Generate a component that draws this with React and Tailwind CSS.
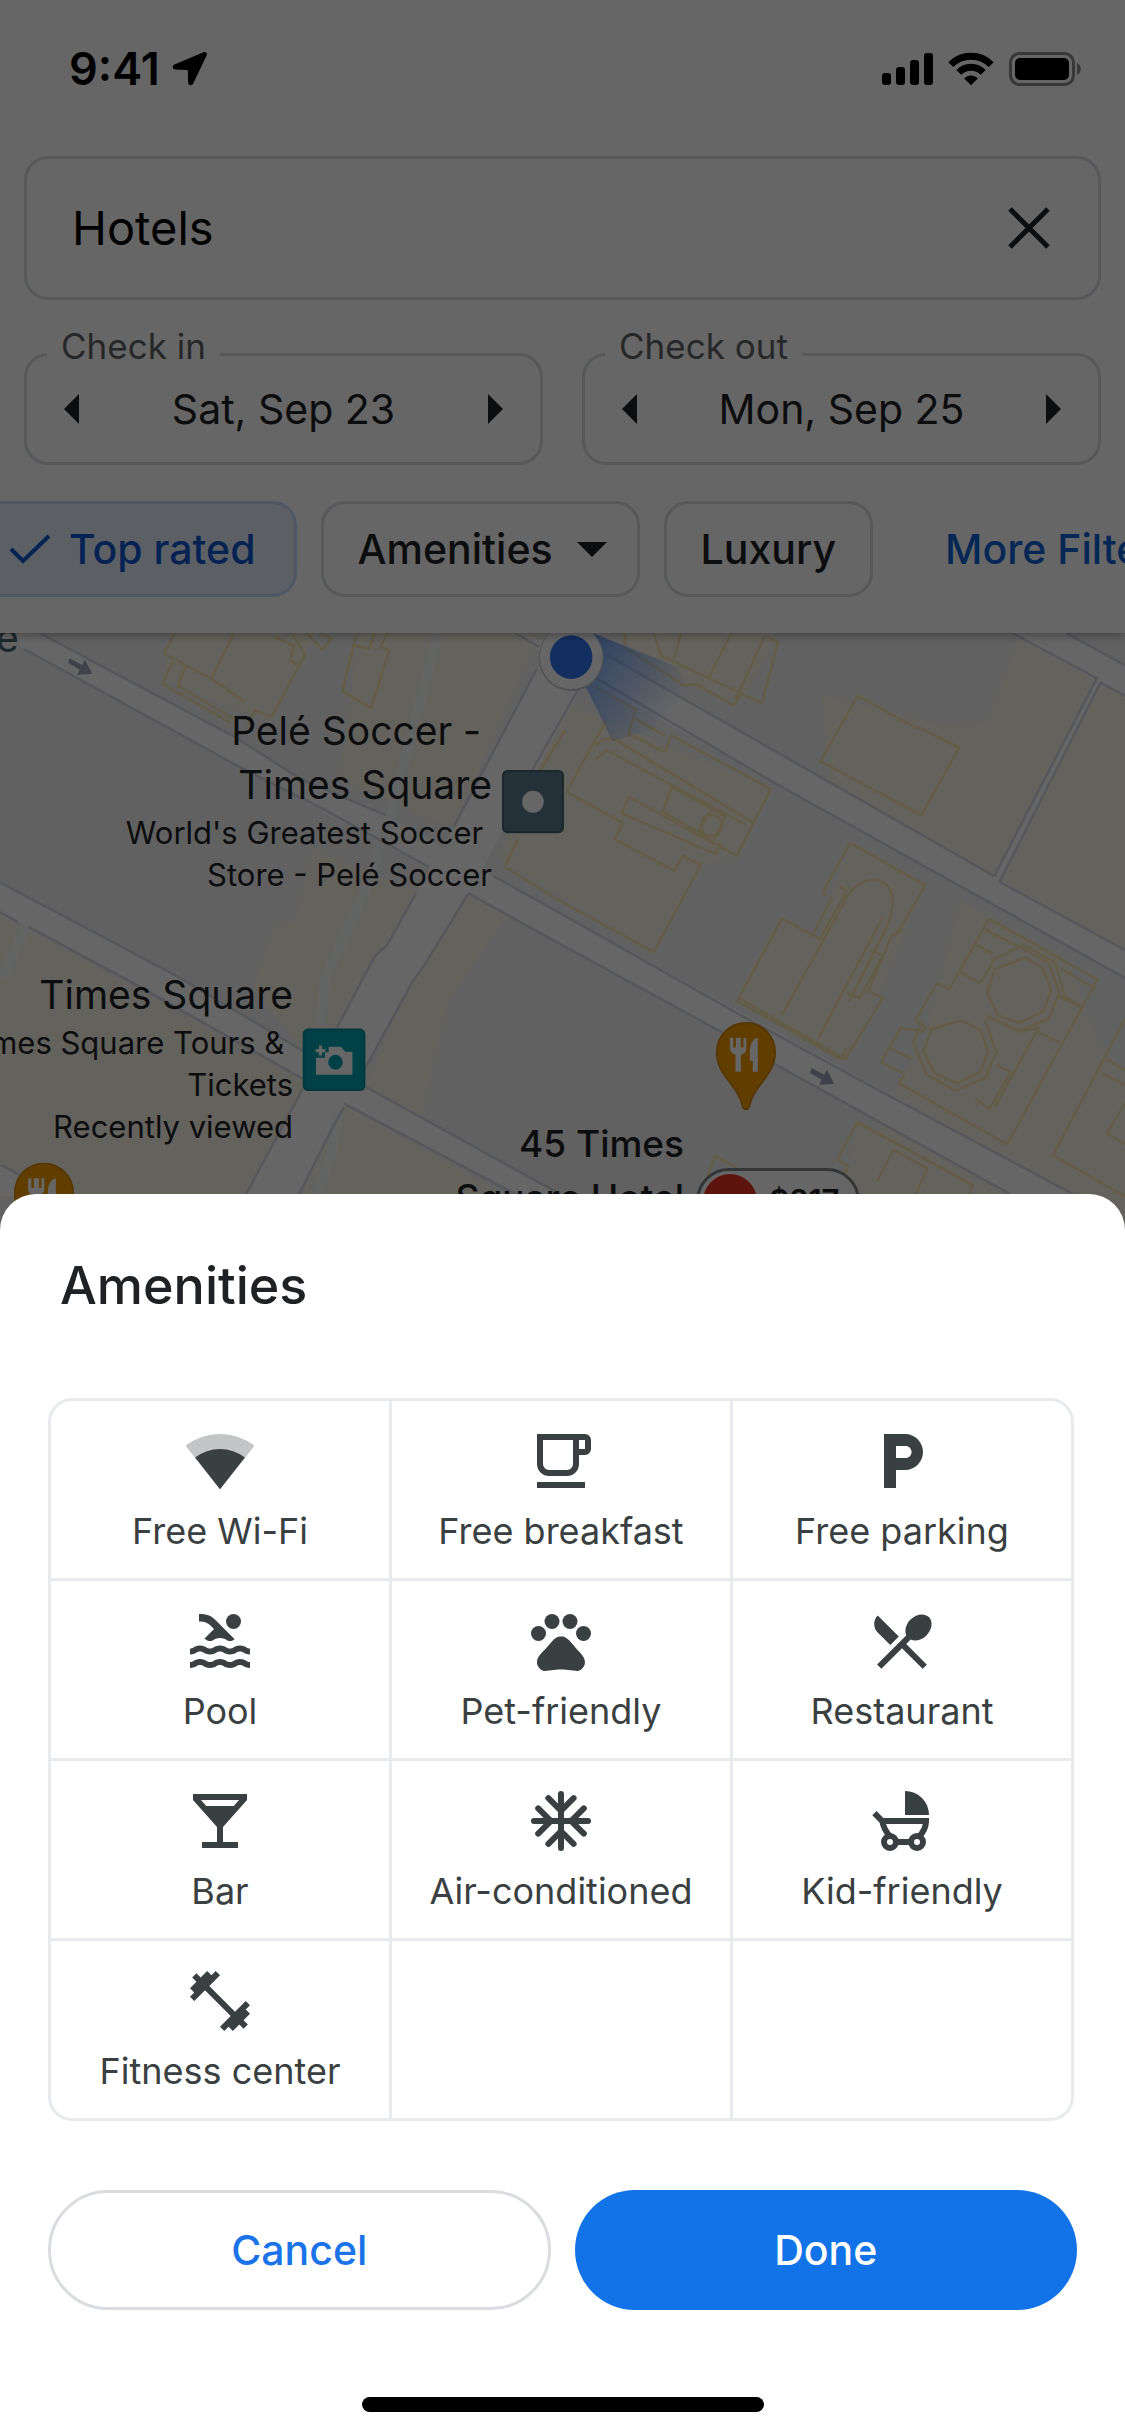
import React from "react";
import {
  MdLocalParking,
  MdPool,
  MdPets,
  MdRestaurantMenu,
  MdLocalBar,
  MdFitnessCenter,
} from "react-icons/md";

function WifiIcon({ className }) {
  return (
    <svg viewBox="0 0 24 24" className={className} fill="currentColor" aria-hidden="true">
      <path opacity=".3" d="M12 21.4 .5 6.9a18.9 18.9 0 0 1 23 0z" />
      <path d="M12 21.4 3.7 10.8a13.7 13.7 0 0 1 16.6 0z" />
    </svg>
  );
}

function CupIcon({ className }) {
  return (
    <svg viewBox="0 0 24 24" className={className} fill="currentColor" aria-hidden="true">
      <path
        fillRule="evenodd"
        d="M4 3h16a2 2 0 0 1 2 2v3a2 2 0 0 1-2 2h-2v3a4 4 0 0 1-4 4H8a4 4 0 0 1-4-4zM6 5v8a2 2 0 0 0 2 2h6a2 2 0 0 0 2-2V5zM18 5v3h2V5zM4 19h16v2H4z"
      />
    </svg>
  );
}

function SnowflakeIcon({ className }) {
  return (
    <svg viewBox="0 0 24 24" className={className} fill="none" stroke="currentColor" strokeWidth="2" strokeLinecap="round" aria-hidden="true">
      <path d="M12 3v18M3 12h18M7.8 4.4 12 8.6l4.2-4.2M7.8 19.6 12 15.4l4.2 4.2M4.4 7.8 8.6 12l-4.2 4.2M19.6 7.8 15.4 12l4.2 4.2" />
    </svg>
  );
}

function StrollerIcon({ className }) {
  return (
    <svg viewBox="0 0 24 24" className={className} aria-hidden="true">
      <path fill="currentColor" d="M13 2a8 8 0 0 1 8 8h-8z" />
      <g fill="none" stroke="currentColor" strokeWidth="2">
        <path d="M2.8 9.4 5.4 12H20c0 2-.9 3.8-2.500 5.400M5.400 12c.4 2 1.200 3.600 2.600 5.200" />
        <path d="M20 12.500V11" />
        <circle cx="8" cy="19" r="2" />
        <circle cx="17" cy="19" r="2" />
        <path d="M10 19h5" />
      </g>
    </svg>
  );
}

const amenities = [
  { label: "Free Wi-Fi", Icon: WifiIcon },
  { label: "Free breakfast", Icon: CupIcon },
  { label: "Free parking", Icon: MdLocalParking },
  { label: "Pool", Icon: MdPool },
  { label: "Pet-friendly", Icon: MdPets },
  { label: "Restaurant", Icon: MdRestaurantMenu },
  { label: "Bar", Icon: MdLocalBar },
  { label: "Air-conditioned", Icon: SnowflakeIcon },
  { label: "Kid-friendly", Icon: StrollerIcon },
  { label: "Fitness center", Icon: MdFitnessCenter },
];

function StatusBar() {
  return (
    <div className="flex h-[138px] items-center justify-between pr-[43px] pl-[69px] text-black">
      <div className="flex items-center gap-3">
        <span className="text-[45px] leading-[48px] font-semibold">9:41</span>
        <svg viewBox="0 0 36 36" className="size-9" fill="currentColor" aria-hidden="true">
          <path d="M31.500 1.300 2.500 13.500c-2.800 1.300-2.100 4.900.9 5.100l12.400.3.300 12.600c.2 3.100 3.900 3.700 5.100.9L34.700 4.200c.9-2.100-1-3.800-3.200-2.900z" />
        </svg>
      </div>
      <div className="flex items-center gap-[15px]">
        <svg viewBox="0 0 51 34" className="h-[34px] w-[51px]" fill="currentColor" aria-label="Cellular signal">
          <rect x="0" y="21" width="9" height="12" rx="3" />
          <rect x="14" y="15" width="9" height="18" rx="3" />
          <rect x="28" y="8" width="9" height="25" rx="3" />
          <rect x="42" y="1" width="9" height="32" rx="3" />
        </svg>
        <svg viewBox="0 0 46 34" className="h-[34px] w-[46px]" aria-label="Wi-Fi">
          <g fill="none" stroke="currentColor" strokeWidth="7">
            <path d="M2.800 12.600a28.500 28.500 0 0 1 40.400 0" />
            <path d="M10.800 20.400a17.200 17.200 0 0 1 24.400 0" />
          </g>
          <path fill="currentColor" d="M23 33.300 16.200 26.400c3.600-3.900 10-3.900 13.600 0z" />
        </svg>
        <svg viewBox="0 0 73 34" className="h-[34px] w-[73px]" fill="currentColor" aria-label="Battery">
          <rect x="1.500" y="1.500" width="63" height="31" rx="9" fill="none" stroke="currentColor" strokeWidth="3" opacity=".45" />
          <rect x="6" y="6" width="54" height="22" rx="5" />
          <path opacity=".45" d="M68 11c5 2 5 10 0 12z" />
        </svg>
      </div>
    </div>
  );
}

function Arrow({ direction }) {
  return (
    <svg viewBox="0 0 15 30" className="h-[30px] w-[15px]" fill="currentColor" aria-hidden="true">
      <path d={direction === "left" ? "M15 0v30L0 15z" : "M0 0v30l15-15z"} />
    </svg>
  );
}

function DateField({ label, value }) {
  return (
    <fieldset className="h-[138px] min-w-0 flex-1 rounded-[24px] border-[3px] border-[#dadce0]">
      <legend className="ml-5 px-3.5 pb-4 text-[35px] leading-[38px] text-[#5f6368]">{label}</legend>
      <div className="flex items-center justify-between px-[37px] pt-1 text-[#202124]">
        <button type="button" aria-label={`${label}: previous day`}>
          <Arrow direction="left" />
        </button>
        <span className="text-[41px] leading-[48px]">{value}</span>
        <button type="button" aria-label={`${label}: next day`}>
          <Arrow direction="right" />
        </button>
      </div>
    </fieldset>
  );
}

function SearchHeader() {
  return (
    <header className="relative z-10 bg-white pb-9 shadow-[0_3px_9px_rgba(0,0,0,0.3)]">
      <StatusBar />
      <div className="px-6 pt-[18px]">
        <div className="flex h-36 items-center rounded-[24px] border-[3px] border-[#dadce0] pr-12 pl-[45px]">
          <input
            type="text"
            aria-label="Search"
            defaultValue="Hotels"
            className="min-w-0 flex-1 bg-transparent text-[47px] leading-[56px] text-black outline-none"
          />
          <button type="button" aria-label="Clear search" className="text-[#202124]">
            <svg viewBox="0 0 42 42" className="size-[42px]" fill="none" stroke="currentColor" strokeWidth="5" aria-hidden="true">
              <path d="M2 2l38 38M40 2 2 40" />
            </svg>
          </button>
        </div>
        <div className="mt-[27px] flex gap-[39px]">
          <DateField label="Check in" value="Sat, Sep 23" />
          <DateField label="Check out" value="Mon, Sep 25" />
        </div>
      </div>
      <div className="mt-9 -ml-8 flex gap-6 overflow-hidden text-[41px] leading-[48px] font-medium whitespace-nowrap text-[#202124]">
        <button type="button" aria-pressed="true" className="flex h-24 shrink-0 items-center gap-[18px] rounded-[24px] border-[3px] border-[#c6dafc] bg-[#e6f0fd] px-[38px] text-[#0b57d0]">
          <svg viewBox="0 0 42 30" className="h-[30px] w-[42px]" fill="none" stroke="currentColor" strokeWidth="4" aria-hidden="true">
            <path d="M2 15l12 12L40 2" />
          </svg>
          Top rated
        </button>
        <button type="button" className="flex h-24 shrink-0 items-center gap-6 rounded-[24px] border-[3px] border-[#dadce0] pr-[30px] pl-[34px]">
          Amenities
          <svg viewBox="0 0 30 15" className="h-[15px] w-[30px]" fill="currentColor" aria-hidden="true">
            <path d="M0 0h30L15 15z" />
          </svg>
        </button>
        <button type="button" className="h-24 shrink-0 rounded-[24px] border-[3px] border-[#dadce0] px-[34px]">
          Luxury
        </button>
        <button type="button" className="h-24 shrink-0 pl-12 text-[#0b63d6]">
          More Filters
        </button>
      </div>
    </header>
  );
}

function MapDrawing() {
  return (
    <svg viewBox="0 0 3122 1700" preserveAspectRatio="xMidYMin slice" className="w-full" aria-hidden="true">
      <defs>
        <linearGradient id="beam" gradientUnits="userSpaceOnUse" x1="1585" y1="74" x2="1850" y2="250">
          <stop offset="0" stopColor="#4285f4" stopOpacity=".75" />
          <stop offset="1" stopColor="#4285f4" stopOpacity="0" />
        </linearGradient>
      </defs>
      <g transform="translate(0 -8) scale(1 1.0266)">
        <rect width="3122" height="1710" fill="#f3f3f4" />
        <g fill="#fbf6e9">
          <path d="M480 0h400l-130 250-300-120zM1000 0h500l-240 530-80-20-240-110zM870 590l290 120-80 140-140 230-95 60-145-170 60-170 60-15zM0 770l850 450-170 320H0zM1300 712l105 65-160 225-75 310-155-75 140-330zM955 1285l500 270H820z" />
          <path d="M1570 200l570 230-100 180-100 30-125 230-430-250zM2360 575l208 115-150 340-70 130-305-165 120-220 105 55zM2665 730l300 165 90 240 70 60v600l-700-370 40-150 100-170zM2280 175l330 80 130-5 90-240 215 120-280 538-460-250zM3054 150l68 30v700l-350-200z" />
          <path d="M1730 8h430l-100 190-300-120zM2380 1330l330 150-60 100h-320z" />
        </g>
        <g fill="#fff">
          <path d="M60 8l50 0 540 280 185 115 235 97 110 60 190 105 374 200 1378 738v97L1554 848 1190 645 665 370 0 15z" />
          <path d="M0 682 500 940 845 1140 1015 1235 1600 1550H1480L955 1280 840 1213 380 960 0 762z" />
          <path d="M1420 8 1679 65 3122 865V940L2144 410 1560 95z" />
          <path d="M1554 40 1490 105 1260 530 1155 710 1075 850 1040 882 840 1240 670 1540H825L955 1290 1145 950 1175 910 1300 712 1640 110z" />
          <path d="M2800 8 3122 178V95L2950 0zM3044 130 2759 665 2774 680 3054 142zM0 1445 180 1540 0 1530z" />
        </g>
        <path d="M1215 8l-125 470-70 210-120 260-10 120M940 1300l-20 120-45 110M70 800 10 940" fill="none" stroke="#f8f9fb" strokeWidth="28" />
        <g fill="none" stroke="#d5dae3" strokeWidth="7">
          <path d="M110 8l540 280 185 115 235 97M65 50l600 320 235 115 290 155M1370 665l184 100 500 275 330 175 738 385M1300 712l254 136 445 237 155 90 730 393" />
          <path d="M1430 8l65 37M1679 65l1080 600M2774 680l348 185M1654 130l490 280 978 530" />
          <path d="M0 682l500 258 345 200M1015 1235l540 290M0 762l50 28M80 802l300 158 460 253M955 1280l505 260M0 1445l60 30" />
          <path d="M1490 105l-230 425M1155 710l-80 140-35 32-105 193M840 1240l-160 290M1640 100l-170 290M1300 712l-125 198-30 40-135 240M955 1290l-30 50-100 195" />
          <path d="M2809 8l235 122-285 535M3122 178l-68-36-280 538M2959 8l163 87" />
        </g>
        <g fill="none" stroke="#f8e5ae" strokeWidth="7" strokeLinejoin="round">
          <path d="M485 8l-30 55 135 70 88 60 M650 8l-65 125M480 85l-30 60 190 105 M515 100l-22 50 155 90M848 65l-95 170-45-18-20 35M805 0l40 65-15 30-25-12 12-40-55-25M850 8l45 45 25-30-35-15M990 8 950 165l80 45 50-155-25-10 20-37M980 40l45 10 15-42" />
          <path d="M1568 270l-70 110 70 30M1400 640l40-80M1400 640l154 92 260 138 130-235-48-25-25 40-165-85 22-43-155-85 60-108 50-85" />
          <path d="M1654 155l110 60-20 65 100 50 20-45 275 145-95 180-110-60 45-75M1764 240l80 45M1654 310c20-20 40-20 60-10l375 220M1654 350l30-25 385 200M1745 450l230 125M1745 450l-20 45 260 110 15-30M1864 425l150 80-35 65-140-80z" />
          <circle cx="1974" cy="528" r="29" />
          <path d="M1734 40l0-32M1814 8l20 60 150 70 130 60 45-165-30-15M1890 8l-20 70M2030 8l-66 125M2120 20l-80 170M1730 45l170 105 30-5 105 58 25-35" />
          <path d="M2380 178l160 85h10l112 55-105 182-280-145z" />
          <path d="M2360 575l208 115-78 130-15 5-65 150 40 20-105 165-295-165 120-215 105 55 75-130-20-12 M2290 720l-5-15 75-130M2307 726l-50 95M2170 1040l165-290c30-75 100-95 130-55 25 35 10 75-10 120l-100 190M2270 1105l180-330M2040 1000l295 160 15-30M2350 980l35 15 65-115-35-15" />
          <path d="M2745 780l300 165-250 445-300-165 15-25M2735 810l110 55M2710 850l45 25M2665 925l55 30M2745 780l-110 190-35-15-60 100 30 20-10 10-60-10-55 92 60 30" />
          <path d="M2845 885l50 30 22 60-22 55-65 32-60-20-30-60 20-65zM2845 865l65 35 30 80-30 70-80 33-90-40M2750 895l90-45 90 50 25 90 50 30M2720 955l40-65" />
          <path d="M2665 1055l55 25 22 60-22 55-65 30-62-27-30-60 22-60zM2735 1060l30 80-30 70-85 35-80-45-35-85 25-60M2730 1060l15-15 80 40 60-10M2765 1175l40 20-60 100-40-30M2880 1085l60 30M2470 1130l60 30M2880 1080l-120 210M2945 915l95 55M2940 990l60 30" />
          <path d="M3122 1050l-200 370 200 110M3122 1190l-50-30M3122 1230l-60-30M3122 1280l-50 80 50 30M2324 1430l55-100 320 170-25 60M2324 1430l30 20-20 40M2434 1490l45-85 95 50-40 85M1944 1530l40-108 60 30" />
        </g>
        <path d="M1585 74 1650 10l230 90 30 60-100 110-110 30z" fill="url(#beam)" />
        <path d="M193 76l35 18 8-14 20 38-42 3 7-14-32-18zM2252 1184l35 18 8-14 20 38-42 3 7-14-32-18z" fill="#9fa6ba" />
        <circle cx="1585" cy="75" r="90" fill="#c5c8ce" />
        <circle cx="1585" cy="73" r="87" fill="#fff" />
        <circle cx="1585" cy="73" r="59" fill="#2f76f0" />

        <rect x="1396" y="381" width="166" height="165" rx="12" fill="#5d7a8c" stroke="#48636f" strokeWidth="6" />
        <circle cx="1479" cy="464" r="30" fill="#fff" />

        <rect x="843" y="1080" width="168" height="163" rx="12" fill="#00a3b5" stroke="#008c9c" strokeWidth="6" />
        <path d="M877 1202v-46h25v-15h10v-15h34l12 14h20v62z" fill="#fff" />
        <path d="M876 1132h9v-9h9v9h9v9h-9v9h-9v-9h-9z" fill="#fff" />
        <circle cx="931" cy="1168" r="20" fill="#00a3b5" />

        <g id="pin">
          <path d="M2070 1062c-46 0-81 36-81 80 0 62 58 84 72 146 3 9 15 9 18 0 14-62 72-84 72-146 0-44-35-80-81-80z" fill="#f29900" stroke="#d98500" strokeWidth="5" />
          <path d="M2026 1102v30c0 8 6 14 15 16v46h15v-46c9-2 15-8 15-16v-30h-8v26h-7v-26h-14v26h-7v-26zM2103 1102c-15 3-22 18-22 38v25h8v29h14z" fill="#fff" />
        </g>
        <use href="#pin" x="-1948" y="380" />
      </g>
    </svg>
  );
}

function MapView() {
  return (
    <main className="relative flex-1 overflow-hidden bg-[#f3f3f4] text-[39px] leading-[54px] text-[#202124]">
      <MapDrawing />
      <div className="absolute top-[-22px] left-0 -ml-1 text-[#4a6572]">e</div>
      <div className="absolute top-[71px] left-0 w-[492px] text-right">
        <div>Pelé Soccer -&nbsp;</div>
        <div>Times Square</div>
        <div className="text-[31px] leading-[42px]">World&apos;s Greatest Soccer&nbsp;</div>
        <div className="text-[31px] leading-[42px]">Store - Pelé Soccer</div>
      </div>
      <div className="absolute top-[335px] left-[-107px] w-[400px] text-right">
        <div>Times Square</div>
        <div className="text-[31px] leading-[42px]">Times Square Tours &amp;&nbsp;</div>
        <div className="text-[31px] leading-[42px]">Tickets</div>
        <div className="text-[31px] leading-[42px]">Recently viewed</div>
      </div>
      <div className="absolute top-[484px] left-[384px] w-[300px] text-right text-[37px] font-medium">
        <div>45 Times</div>
        <div>Square Hotel</div>
      </div>
      <div className="absolute top-[535px] left-[696px] flex h-[66px] w-[164px] items-center gap-3 rounded-full border-[3px] border-[#80868b] bg-white pl-1 text-[31px] font-semibold">
        <span className="size-[54px] rounded-full bg-[#ea3323]" />
        $217
      </div>
    </main>
  );
}

function AmenitiesSheet() {
  return (
    <section role="dialog" aria-labelledby="sheet-title" className="absolute inset-x-0 bottom-0 z-30 rounded-t-[36px] bg-white px-12 pb-6">
      <h2 id="sheet-title" className="px-3 pt-[60px] text-[52px] leading-[64px] font-medium text-[#202124]">
        Amenities
      </h2>
      <div className="mt-20 mr-[3px] grid grid-cols-3 gap-[3px] overflow-hidden rounded-[24px] border-[3px] border-[#e8eaed] bg-[#e8eaed]">
        {amenities.map(({ label, Icon }) => (
          <button key={label} type="button" className="flex h-[177px] flex-col items-center bg-white pt-6 text-[#3a3f41]">
            <Icon className="size-[72px]" />
            <span className="mt-2.5 text-[36px] leading-[48px]">{label}</span>
          </button>
        ))}
        <div className="bg-white" />
        <div className="bg-white" />
      </div>
      <div className="mt-[69px] grid grid-cols-2 gap-6 text-[41px] leading-[48px] font-medium">
        <button type="button" className="h-[120px] rounded-full border-[3px] border-[#dadce0] text-[#1a73e8]">
          Cancel
        </button>
        <button type="button" className="h-[120px] rounded-full bg-[#1273e9] text-white">
          Done
        </button>
      </div>
      <div className="mx-auto mt-[87px] h-[15px] w-[402px] rounded-full bg-black" />
    </section>
  );
}

export default function App() {
  return (
    <div className="relative flex min-h-screen flex-col overflow-hidden bg-white font-[Inter,'Liberation_Sans',sans-serif]">
      <SearchHeader />
      <MapView />
      <div className="absolute inset-0 z-20 bg-black/60" />
      <AmenitiesSheet />
    </div>
  );
}
